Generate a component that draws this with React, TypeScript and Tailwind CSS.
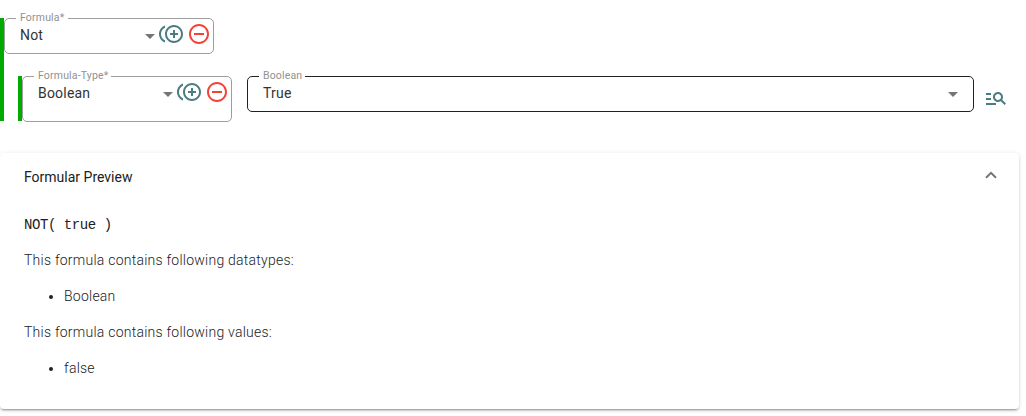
import React from "react";
import {
  MdControlPointDuplicate,
  MdManageSearch,
  MdRemoveCircleOutline,
} from "react-icons/md";

interface FieldProps {
  label: string;
  value: string;
  className: string;
  labelClassName: string;
  children?: React.ReactNode;
}

const Arrow = () => (
  <span className="h-0 w-0 border-x-[5px] border-t-[5px] border-x-transparent border-t-[#757575]" />
);

const Field = ({ label, value, className, labelClassName, children }: FieldProps) => (
  <div className={`relative flex items-start rounded-[5px] border pl-[15px] ${className}`}>
    <label
      className={`absolute -top-[8px] left-[11px] h-[14px] bg-white pl-1 text-[10.5px] leading-[14px] tracking-[0.17px] whitespace-nowrap text-[#919191] ${labelClassName}`}
    >
      {label}
    </label>
    <span className="mt-[7px] flex-1 text-sm leading-[18px] tracking-[0.2px] text-[#333333]">{value}</span>
    {children}
  </div>
);

const FormulaActions = () => (
  <>
    <div className="mt-[15px] flex">
      <Arrow />
    </div>
    <button className="mt-[3px] ml-[4px] text-[#4b7c80]">
      <MdControlPointDuplicate size={24} />
    </button>
    <button className="mt-[3px] mr-[2px] ml-[4px] text-[#f44336]">
      <MdRemoveCircleOutline size={24} />
    </button>
  </>
);

const Section = ({ title, items }: { title: string; items: string[] }) => (
  <>
    <p className="mb-4">{title}</p>
    <ul className="mb-4 list-disc pl-10">
      {items.map((item) => (
        <li key={item}>{item}</li>
      ))}
    </ul>
  </>
);

const App = () => {
  return (
    <div className="h-[416px] overflow-hidden bg-white pt-[18px] font-['Roboto',sans-serif]">
      <div className="h-[103px] border-l-4 border-[#00aa00]">
        <Field
          label="Formula*"
          value="Not"
          className="h-9 w-[210px] border-[#9e9e9e]"
          labelClassName="w-[52px]"
        >
          <FormulaActions />
        </Field>
        <div className="mt-[22px] ml-[14px] flex items-start">
          <div className="h-[45px] border-l-4 border-[#00aa00]">
            <Field
              label="Formula-Type*"
              value="Boolean"
              className="h-[46px] w-[210px] border-[#9e9e9e]"
              labelClassName="w-[77px]"
            >
              <FormulaActions />
            </Field>
          </div>
          <Field
            label="Boolean"
            value="True"
            className="ml-[15px] h-9 w-[727px] border-[#212121]"
            labelClassName="w-[46px]"
          >
            <div className="mt-[15px] mr-[15px] flex">
              <Arrow />
            </div>
          </Field>
          <button className="mt-[10px] ml-[10px] text-[#4b7c80]">
            <MdManageSearch size={24} />
          </button>
        </div>
      </div>

      <div className="mt-8 h-[256px] w-[1019px] rounded-[4px] bg-white px-6 shadow-[0_3px_1px_-2px_rgba(0,0,0,0.2),0_2px_2px_0_rgba(0,0,0,0.14),0_1px_5px_0_rgba(0,0,0,0.12)]">
        <div className="flex h-12 items-center justify-between text-sm text-[#212121]">
          <span>Formular Preview</span>
          <svg width="12" height="8" viewBox="0 0 12 8" className="mr-[-2px] mb-[5px]">
            <path d="M1 6.8L6 1.8L11 6.8" fill="none" stroke="#757575" strokeWidth="2" />
          </svg>
        </div>
        <div className="pt-[14px] text-sm leading-5 font-light tracking-[0.24px] text-[#212121]">
          <pre className="mb-[15px] font-['Liberation_Mono',monospace] text-[14px] font-normal tracking-[-0.43px]">
            NOT( true )
          </pre>
          <Section title="This formula contains following datatypes:" items={["Boolean"]} />
          <Section title="This formula contains following values:" items={["false"]} />
        </div>
      </div>
    </div>
  );
};

export default App;
